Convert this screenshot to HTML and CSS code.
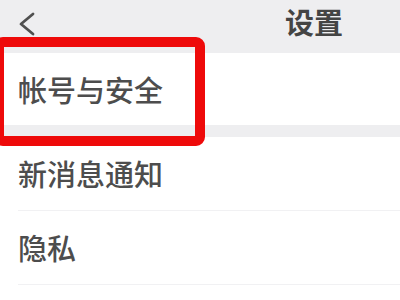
FILE: index.html
```html
<!DOCTYPE html>
<html lang="zh">
<head>
    <meta charset="UTF-8">
    <title>设置</title>
    <link rel="stylesheet" href="styles.css">
</head>
<body>
    <div class="screen">
        <div class="header">
            <svg class="back" width="17" height="24" viewBox="0 0 17 24">
                <polyline points="15,2 3,12 15,22" fill="none" stroke="#505050" stroke-width="2.8" stroke-linejoin="round" stroke-linecap="round"/>
            </svg>
            <div class="title">设置</div>
        </div>

        <div class="group first">
            <div class="item">帐号与安全</div>
        </div>

        <div class="group">
            <div class="item line">新消息通知</div>
            <div class="item line">隐私</div>
        </div>

        <!-- highlight drawn over the first row -->
        <div class="mark"></div>
    </div>
</body>
</html>
```

FILE: styles.css
```css
/* Settings screen */
body {
    margin: 0;
    font-family: "Noto Sans CJK SC", "Noto Sans", sans-serif;
    background-color: #ffffff;
}

.screen {
    position: relative;
    width: 400px;
    height: 300px;
    overflow: hidden;
    background-color: #ffffff;
}

.header {
    height: 53px;
    display: flex;
    align-items: center;
    padding-left: 18px;
    background-color: #eeeef0;
}

.back {
    margin-top: -6px;
}

.title {
    margin-left: 250px;
    margin-top: -10px;
    font-size: 29px;
    font-weight: bold;
    line-height: 1;
    color: #444;
}

.group {
    background-color: #ffffff;
}

.group.first {
    border-bottom: 12px solid #eeeef0;
}

.item {
    height: 72px;
    display: flex;
    align-items: center;
    margin-left: 18px;
    font-size: 29px;
    font-weight: 500;
    line-height: 1;
    color: #4d4d4d;
}

.item.line {
    height: 73px;
    border-bottom: 1px solid #f1f1f3;
}

.mark {
    position: absolute;
    left: -6px;
    top: 37px;
    width: 191px;
    height: 89px;
    border: 10px solid #ee0a0a;
    border-radius: 9px;
}
```
